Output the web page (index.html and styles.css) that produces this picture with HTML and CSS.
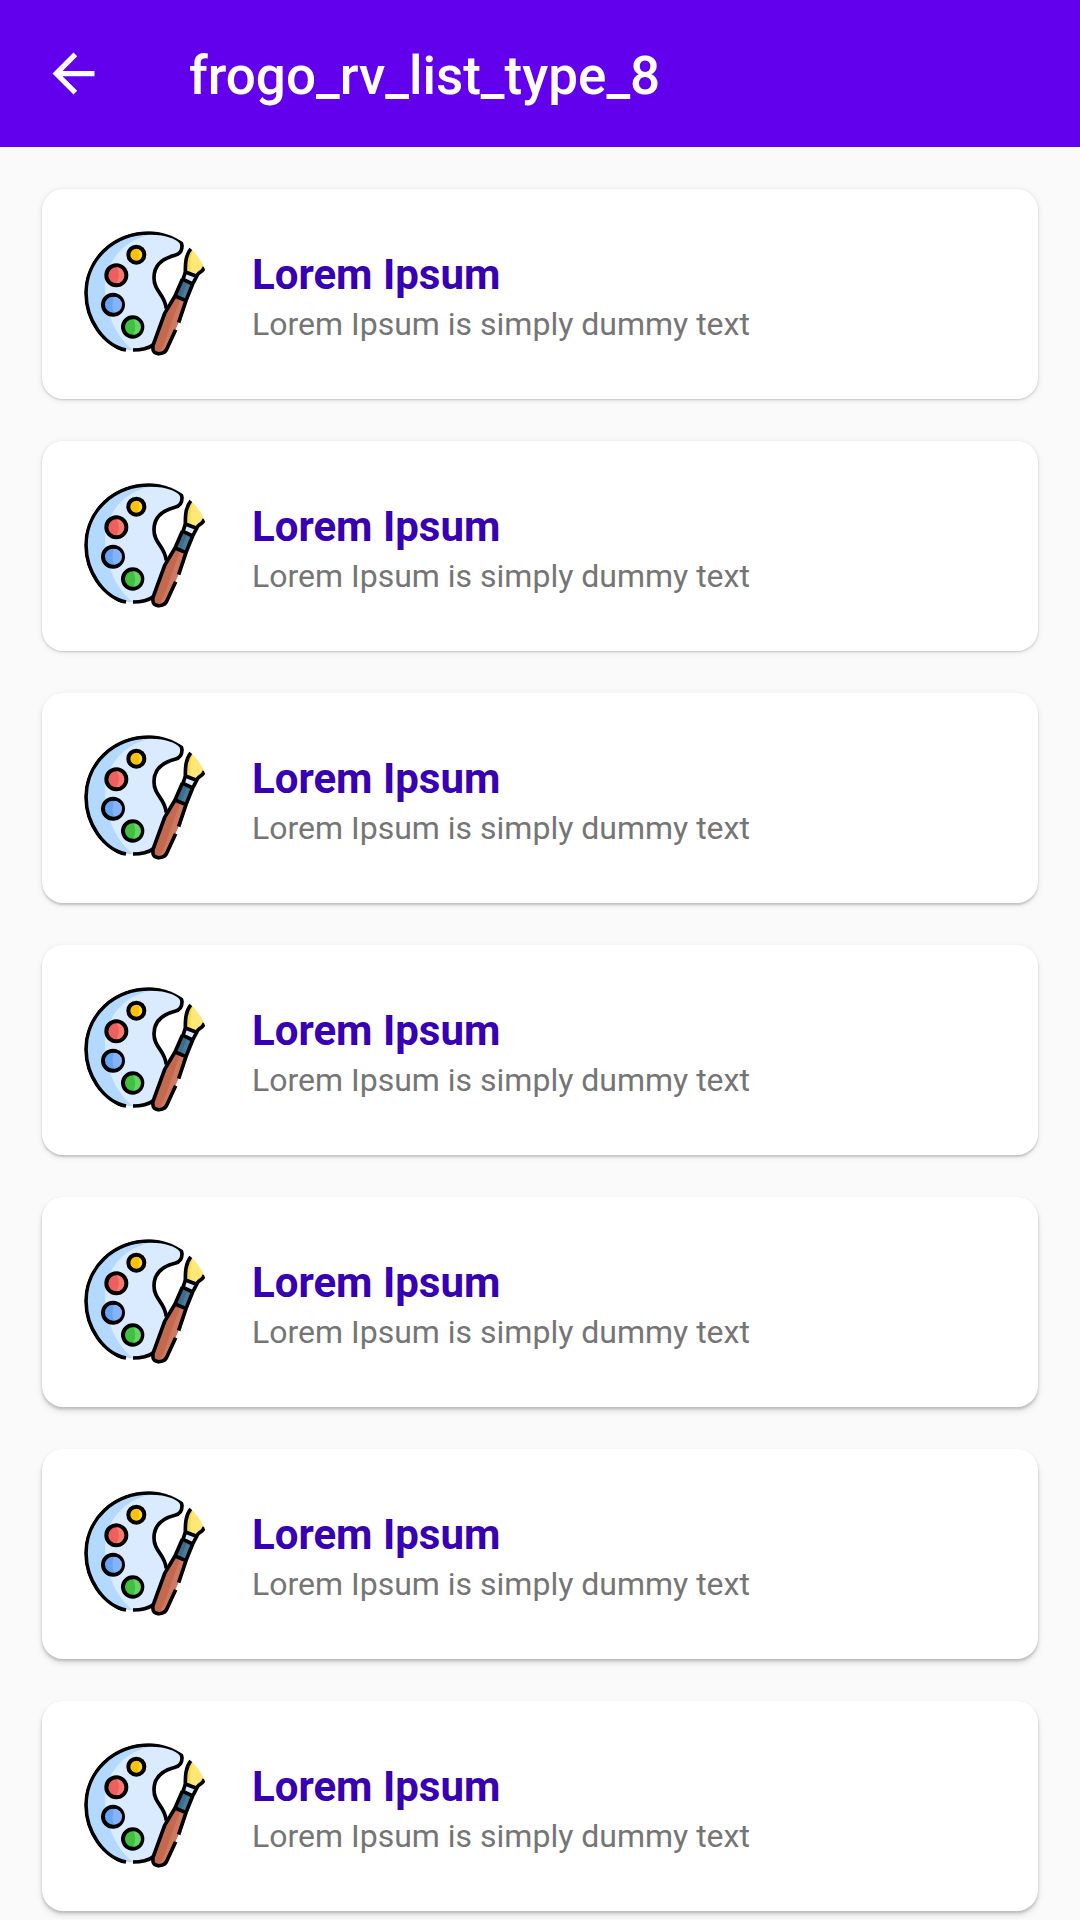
FILE: index.html
```html
<!DOCTYPE html>
<html lang="en">
<head>
<meta charset="utf-8">
<meta name="viewport" content="width=device-width, initial-scale=1">
<title>frogo_rv_list_type_8</title>
<link rel="stylesheet" href="styles.css">
</head>
<body>
<svg class="sprite" aria-hidden="true">
  <symbol id="palette" viewBox="42 45 378 378">
    <clipPath id="round"><circle cx="231" cy="234" r="189"/></clipPath>
    <g clip-path="url(#round)">
      <path fill="#b3dafe" d="M178 403C105 396 48 310 48 231C48 130 130 51 240 51C290 51 338 66 336 90C336 105 330 114 315 118C275 128 252 150 252 185C252 230 280 235 288 275L250 385Q225 403 178 403Z"/>
      <path fill="#dbebff" d="M250 55C160 68 105 140 105 215C105 290 140 365 190 403Q230 400 250 385L288 275C280 235 252 230 252 185C252 150 275 128 315 118C330 114 336 105 336 90C338 66 290 51 250 55Z"/>
      <path class="ink" d="M168 402C100 390 48 310 48 231C48 130 130 51 240 51C290 51 338 66 336 90C336 105 330 114 315 118C275 128 252 150 252 185C252 228 284 232 289 278M189 402Q228 402 250 386"/>
      <g stroke="#000" stroke-width="12">
        <circle cx="199" cy="116" r="24" fill="#ffc107"/>
        <circle cx="139" cy="178" r="30" fill="#ee605f"/>
        <circle cx="129" cy="266" r="30" fill="#66a4f4"/>
        <circle cx="188" cy="333" r="29" fill="#3fc03f"/>
      </g>
      <path fill="#f7dd45" d="M205 99Q225 116 205 133Q211 116 205 99Z"/>
      <path fill="#fc7a6c" d="M139 154A24 24 0 0 1 139 202Q155 178 139 154Z"/>
      <path fill="#85b4fb" d="M132 242A24 24 0 0 1 132 290Q123 266 132 242Z"/>
      <path fill="#64d465" d="M190 310A23 23 0 0 1 190 356Q201 333 190 310Z"/>
      <path fill="#c2694f" d="M315 240L348 254L323 325L290 400Q272 424 251 408Q246 402 248 390L284 292Z"/>
      <path fill="#cf7a60" d="M331 247L348 254L323 325L290 400Q282 413 268 412Q278 395 290 362Z"/>
      <path fill="#3f6c8c" d="M337 190L367 204L348 254L315 240Z"/>
      <path fill="#4b7b9b" d="M352 197L367 204L348 254L333 247Z"/>
      <path fill="#dbebff" d="M346 168L379 181L367 204L339 191Z"/>
      <path fill="#f5dc48" d="M360 98Q343 125 346 168L380 181Q400 170 404 154L420 120L380 80Z"/>
      <path fill="#ffe877" d="M370 98Q358 125 362 172L380 181Q400 170 404 154L420 120L380 80Z"/>
      <path class="ink" d="M363 98C346 118 346 145 346 168L380 181Q382 175 390 169Q400 164 403 153M346 168L339 190L368 204L380 181M337 190L315 240L348 254L368 204M315 240L284 292L249 388Q247 404 253 409Q263 416 276 412Q286 409 290 400L317 341M348 254L326 320"/>
    </g>
  </symbol>
</svg>

<header class="app-bar">
  <button class="back" type="button" aria-label="Back">
    <svg viewBox="0 0 24 24" aria-hidden="true"><path fill="currentColor" d="M20 11H7.830l5.590-5.590L12 4l-8 8 8 8 1.410-1.410L7.830 13H20v-2z"/></svg>
  </button>
  <h1 class="app-title">frogo_rv_list_type_8</h1>
</header>

<main>
  <ul class="list">
    <li class="card"><svg class="thumb" aria-hidden="true"><use href="#palette"/></svg><div class="body"><h2 class="title">Lorem Ipsum</h2><p class="subtitle">Lorem Ipsum is simply dummy text</p></div></li>
    <li class="card"><svg class="thumb" aria-hidden="true"><use href="#palette"/></svg><div class="body"><h2 class="title">Lorem Ipsum</h2><p class="subtitle">Lorem Ipsum is simply dummy text</p></div></li>
    <li class="card"><svg class="thumb" aria-hidden="true"><use href="#palette"/></svg><div class="body"><h2 class="title">Lorem Ipsum</h2><p class="subtitle">Lorem Ipsum is simply dummy text</p></div></li>
    <li class="card"><svg class="thumb" aria-hidden="true"><use href="#palette"/></svg><div class="body"><h2 class="title">Lorem Ipsum</h2><p class="subtitle">Lorem Ipsum is simply dummy text</p></div></li>
    <li class="card"><svg class="thumb" aria-hidden="true"><use href="#palette"/></svg><div class="body"><h2 class="title">Lorem Ipsum</h2><p class="subtitle">Lorem Ipsum is simply dummy text</p></div></li>
    <li class="card"><svg class="thumb" aria-hidden="true"><use href="#palette"/></svg><div class="body"><h2 class="title">Lorem Ipsum</h2><p class="subtitle">Lorem Ipsum is simply dummy text</p></div></li>
    <li class="card"><svg class="thumb" aria-hidden="true"><use href="#palette"/></svg><div class="body"><h2 class="title">Lorem Ipsum</h2><p class="subtitle">Lorem Ipsum is simply dummy text</p></div></li>
  </ul>
</main>
</body>
</html>
```
FILE: styles.css
```css
* {
  box-sizing: border-box;
}

body {
  margin: 0;
  background: #fafafa;
  font-family: Roboto, "Noto Sans", sans-serif;
}

h1, h2, p {
  margin: 0;
}

.sprite {
  position: absolute;
  width: 0;
  height: 0;
}

.ink {
  fill: none;
  stroke: #000;
  stroke-width: 11;
  stroke-linejoin: round;
}

.app-bar {
  display: flex;
  align-items: center;
  gap: 84px;
  padding: 42px;
  background: #6200ee;
  color: #fff;
}

.back {
  flex: none;
  width: 63px;
  height: 63px;
  padding: 0;
  border: 0;
  background: none;
  color: inherit;
}

.back svg {
  display: block;
  width: 100%;
  height: 100%;
}

.app-title {
  padding-top: 5px;
  font-size: 53px;
  font-weight: 500;
  line-height: 58px;
}

.list {
  display: flex;
  flex-direction: column;
  gap: 42px;
  margin: 0;
  padding: 42px 42px 8px;
  list-style: none;
}

.card {
  display: flex;
  align-items: center;
  gap: 42px;
  padding: 42px;
  border-radius: 21px;
  background: #fff;
  box-shadow: 0 1px 2px rgba(0, 0, 0, 0.16), 0 1px 6px rgba(0, 0, 0, 0.10);
}

.card:nth-child(n + 3) {
  box-shadow: 0 2px 2px rgba(0, 0, 0, 0.16), 0 2px 6px rgba(0, 0, 0, 0.10);
}

.card:nth-child(n + 5) {
  box-shadow: 0 2px 3px rgba(0, 0, 0, 0.18), 0 4px 6px rgba(0, 0, 0, 0.12);
}

.thumb {
  flex: none;
  width: 126px;
  height: 126px;
}

.body {
  display: flex;
  flex-direction: column;
  gap: 6px;
  padding-top: 5px;
}

.title {
  color: #3700b3;
  font-size: 42px;
  font-weight: 700;
  line-height: 49px;
}

.subtitle {
  color: #757575;
  font-size: 32px;
  line-height: 38px;
}
```
